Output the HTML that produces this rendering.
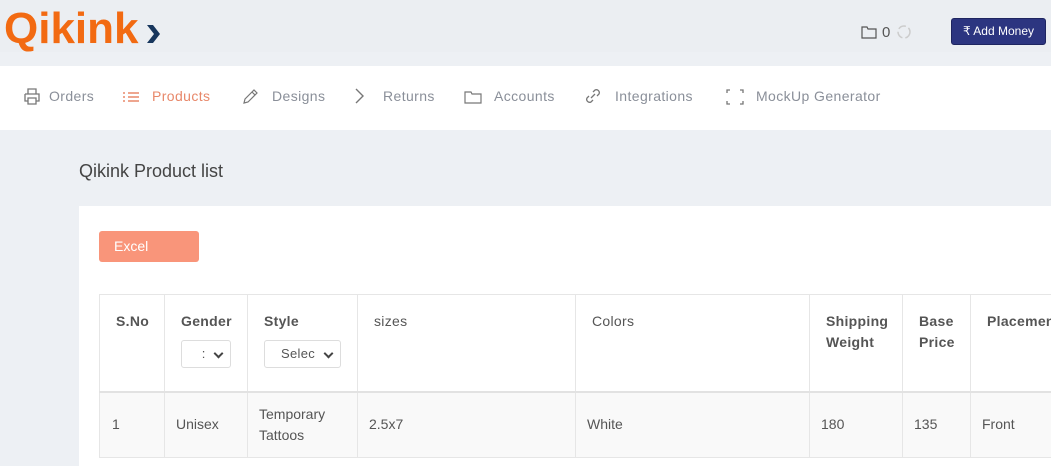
<!DOCTYPE html>
<html><head><style>
*{box-sizing:border-box;margin:0;padding:0}
body{width:1051px;height:462px;overflow:hidden;background:#edf0f4;font-family:"Liberation Sans",sans-serif;position:relative}
.hdr{position:absolute;left:0;top:0;width:1051px;height:52px;background:#ebeef2}
.logo{position:absolute;left:4px;top:7px;font-size:44px;font-weight:bold;color:#f26a12;letter-spacing:0px;line-height:44px}
.nav{position:absolute;left:0;top:66px;width:1051px;height:64px;background:#fff}
.nav .it{position:absolute;top:22px;font-size:14px;color:#8a8f99;letter-spacing:.4px}
.nav svg{position:absolute;top:-1px}
.btn{position:absolute;left:951px;top:18px;width:95px;height:27px;background:#2c3580;border:1px solid #1e2560;border-radius:3px;color:#fff;font-size:12px;line-height:25px;text-align:center}
.title{position:absolute;left:79px;top:161px;font-size:18px;color:#444}
.card{position:absolute;left:79px;top:206px;width:980px;height:260px;background:#fff}
.excel{position:absolute;left:99px;top:231px;width:100px;height:31px;background:#f9957a;border-radius:3px;color:#fff;font-size:14px;line-height:31px;padding-left:15px}
table{position:absolute;left:99px;top:294px;border-collapse:collapse;font-size:14px;color:#555;table-layout:fixed;width:991px}
td,th{border:1px solid #e6e6e6;vertical-align:top;text-align:left;overflow:hidden}
th{height:97px;font-weight:bold;color:#555;padding:16px 8px 0 16px;line-height:21px;border-bottom:2px solid #e2e2e2;letter-spacing:.3px}
td{height:66px;background:#f9f9f9;vertical-align:middle;padding:0 8px 0 11px;line-height:21px}
.sel{display:block;margin-top:8px;height:28px;border:1px solid #ddd;border-radius:3px;font-weight:normal;font-size:13px;color:#555;position:relative;padding-left:8px;line-height:26px;overflow:hidden}
.sel:after{content:"";position:absolute;right:8px;top:9px;width:5px;height:5px;border-right:2px solid #444;border-bottom:2px solid #444;transform:rotate(45deg)}
</style></head><body>
<div class="hdr"></div>
<div class="logo">Qikink</div>
<svg style="position:absolute;left:144px;top:23px" width="18" height="22"><path d="M3 2h6l7 9-7 9H3l7-9z" fill="#17365d"/></svg>
<svg style="position:absolute;left:861px;top:25px" width="16" height="14"><path d="M1 2h5l1 2h8v9H1z" fill="none" stroke="#555" stroke-width="1.2"/></svg>
<div style="position:absolute;left:882px;top:24px;font-size:15px;color:#555">0</div>
<svg style="position:absolute;left:896px;top:24px" width="16" height="16"><circle cx="8" cy="8" r="6" fill="none" stroke="#ccc" stroke-width="1.5" stroke-dasharray="8 3"/></svg>
<div class="btn">₹ Add Money</div>
<div class="nav">
<div class="it" style="left:49px"><svg style="left:-26px" width="18" height="18"><path d="M5 7V2h8v5M2 7h14v7h-3M5 14H2V7M5 11h8v6H5z" fill="none" stroke="#777" stroke-width="1.3"/></svg>Orders</div>
<div class="it" style="left:152px;color:#e8886a"><svg style="left:-30px;top:2px" width="18" height="14"><path d="M1 3h2M6 3h11M1 7h2M6 7h11M1 11h2M6 11h11" stroke="#e8886a" stroke-width="1.4"/></svg>Products</div>
<div class="it" style="left:272px"><svg style="left:-30px" width="18" height="18"><path d="M2 16l1-4 9-9 3 3-9 9zM10 5l3 3" fill="none" stroke="#777" stroke-width="1.2"/></svg>Designs</div>
<div class="it" style="left:383px"><svg style="left:-30px" width="14" height="18"><path d="M3 2l7 7-7 7" fill="none" stroke="#777" stroke-width="1.4"/></svg>Returns</div>
<div class="it" style="left:494px"><svg style="left:-30px;top:1px" width="18" height="16"><path d="M1 3h6l1 2h9v9H1z" fill="none" stroke="#777" stroke-width="1.2"/></svg>Accounts</div>
<div class="it" style="left:615px"><svg style="left:-31px" width="18" height="18"><path d="M7 11l4-4M5 9l-2 2a3 3 0 004 4l2-2M13 9l2-2a3 3 0 00-4-4L9 5" fill="none" stroke="#777" stroke-width="1.3"/></svg>Integrations</div>
<div class="it" style="left:756px"><svg style="left:-30px;top:0" width="18" height="18"><path d="M1 5V2h3M14 2h3v3M17 13v3h-3M4 16H1v-3" fill="none" stroke="#777" stroke-width="1.3"/></svg>MockUp Generator</div>
</div>
<div class="title">Qikink Product list</div>
<div class="card"></div>
<div class="excel">Excel</div>
<table>
<colgroup><col style="width:65px"><col style="width:83px"><col style="width:110px"><col style="width:218px"><col style="width:234px"><col style="width:93px"><col style="width:68px"><col style="width:120px"></colgroup>
<tr>
<th>S.No</th>
<th>Gender<span class="sel" style="width:50px">&nbsp;&nbsp;&nbsp;:</span></th>
<th>Style<span class="sel" style="width:77px;padding-left:16px">Selec</span></th>
<th style="font-weight:normal">sizes</th>
<th style="font-weight:normal">Colors</th>
<th>Shipping Weight</th>
<th>Base Price</th>
<th>Placement</th>
</tr>
<tr>
<td style="padding-left:12px">1</td><td>Unisex</td><td>Temporary Tattoos</td><td>2.5x7</td><td>White</td><td>180</td><td>135</td><td>Front</td>
</tr>
</table>
</body></html>
